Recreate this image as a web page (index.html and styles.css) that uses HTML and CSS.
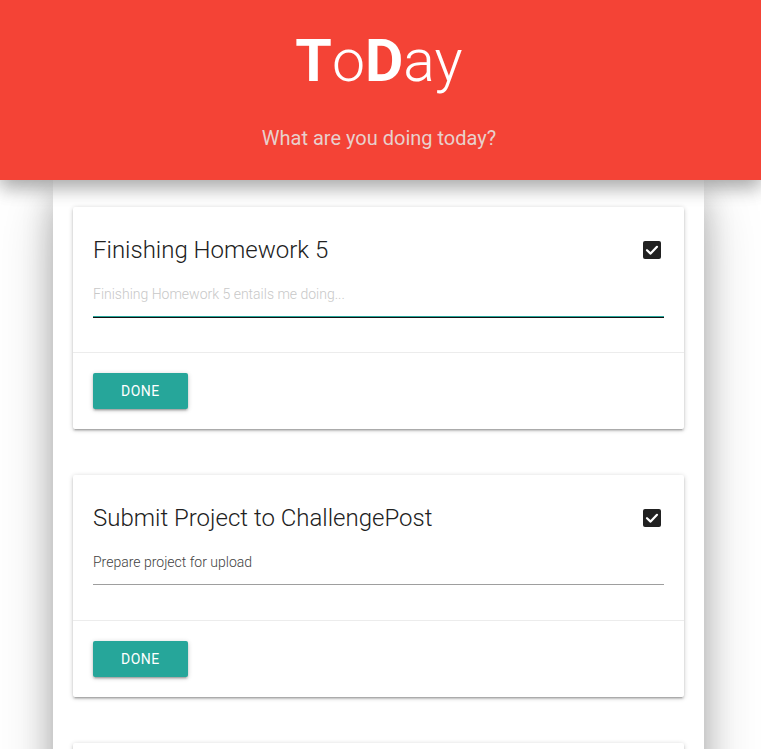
FILE: index.html
```html
<!DOCTYPE html>
<html>
<head>
<meta charset="utf-8">
<title>ToDay</title>
<link rel="stylesheet" href="styles.css">
</head>
<body>
<header class="hero">
  <h1 class="brand"><b>T</b>o<b>D</b>ay</h1>
  <p class="tagline">What are you doing today?</p>
</header>
<main class="panel">
  <section class="card">
    <div class="card-content">
      <div class="card-head">
        <h2 class="card-title">Finishing Homework 5</h2>
        <span class="check"><svg width="18" height="18" viewBox="0 0 18 18"><rect x="0" y="0" width="18" height="18" rx="2" fill="#212121"/><path d="M4 9.2 L7.6 12.6 L14 5.8" fill="none" stroke="#fff" stroke-width="2.2" stroke-linecap="round" stroke-linejoin="round"/></svg></span>
      </div>
      <input class="field field-focus" type="text" placeholder="Finishing Homework 5 entails me doing...">
    </div>
    <div class="card-action">
      <button class="btn">Done</button>
    </div>
  </section>
  <section class="card">
    <div class="card-content">
      <div class="card-head">
        <h2 class="card-title">Submit Project to ChallengePost</h2>
        <span class="check"><svg width="18" height="18" viewBox="0 0 18 18"><rect x="0" y="0" width="18" height="18" rx="2" fill="#212121"/><path d="M4 9.2 L7.6 12.6 L14 5.8" fill="none" stroke="#fff" stroke-width="2.2" stroke-linecap="round" stroke-linejoin="round"/></svg></span>
      </div>
      <input class="field" type="text" value="Prepare project for upload">
    </div>
    <div class="card-action">
      <button class="btn">Done</button>
    </div>
  </section>
  <section class="card card-empty"></section>
</main>
</body>
</html>
```
FILE: styles.css
```css
* { box-sizing: border-box; }
html, body { margin: 0; padding: 0; }
body {
  background: #fff;
  font-family: Roboto, "Noto Sans", Arial, sans-serif;
  color: rgba(0,0,0,0.87);
  overflow: hidden;
  height: 749px;
}
.hero {
  position: relative;
  z-index: 2;
  height: 180px;
  background: #f44336;
  text-align: center;
  box-shadow: 0 8px 17px 0 rgba(0,0,0,0.2), 0 6px 20px 0 rgba(0,0,0,0.19);
  padding-top: 26px;
}
.brand {
  margin: 0 0 0 -3px;
  font-size: 59px;
  line-height: 70px;
  font-weight: 300;
  color: #fff;
}
.brand b { font-weight: 700; }
.tagline {
  margin: 30px 0 0 -3px;
  font-size: 20px;
  line-height: 24px;
  font-weight: 400;
  color: #e8d0cc;
}
.panel {
  position: relative;
  z-index: 1;
  width: 651px;
  margin-left: 53px;
  background: #fff;
  padding: 27px 20px 20px;
  min-height: 700px;
  box-shadow: 0 16px 28px 0 rgba(0,0,0,0.22), 0 25px 55px 0 rgba(0,0,0,0.21);
}
.card {
  background: #fff;
  border-radius: 2px;
  margin-bottom: 46px;
  box-shadow: 0 2px 2px 0 rgba(0,0,0,0.14), 0 3px 1px -2px rgba(0,0,0,0.12), 0 1px 5px 0 rgba(0,0,0,0.2);
}
.card-empty { height: 120px; }
.card-content {
  padding: 25px 20px 35px;
}
.card-head {
  display: flex;
  align-items: center;
  justify-content: space-between;
  height: 36px;
}
.card-title {
  margin: 0;
  font-size: 24px;
  font-weight: 300;
  line-height: 36px;
  color: #212121;
}
.check {
  display: flex;
  width: 18px;
  height: 18px;
  margin-right: 3px;
}
.field {
  display: block;
  width: 100%;
  height: 40px;
  margin-top: 9px;
  padding: 6px 0 12px;
  border: none;
  border-bottom: 1px solid #9e9e9e;
  outline: none;
  background: transparent;
  font-family: Roboto, "Noto Sans", Arial, sans-serif;
  font-size: 14px;
  font-weight: 300;
  color: #424242;
}
.field::placeholder { color: #c8c8c8; }
.field-focus {
  border-bottom: 1px solid #26a69a;
  box-shadow: 0 1px 0 0 #111;
}
.card-action {
  border-top: 1px solid rgba(160,160,160,0.2);
  padding: 20px 20px 20px;
}
.btn {
  display: block;
  height: 36px;
  padding: 0 28px;
  border: none;
  border-radius: 2px;
  background: #26a69a;
  color: #fff;
  font-family: Roboto, "Noto Sans", Arial, sans-serif;
  font-size: 14px;
  font-weight: 400;
  letter-spacing: 0.5px;
  text-transform: uppercase;
  box-shadow: 0 2px 2px 0 rgba(0,0,0,0.14), 0 3px 1px -2px rgba(0,0,0,0.12), 0 1px 5px 0 rgba(0,0,0,0.2);
}
```
